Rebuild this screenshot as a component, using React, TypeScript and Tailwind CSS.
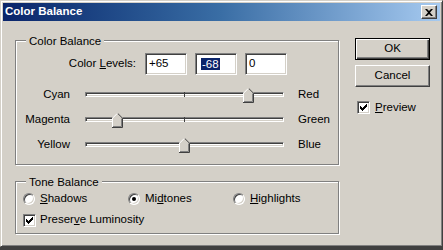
import React from "react"

// classic win2k bevels
const sunken =
  "border border-t-[#808080] border-l-[#808080] border-b-white border-r-white shadow-[inset_1px_1px_0_#404040,inset_-1px_-1px_0_#d4d0c8]"
const raised =
  "border border-t-white border-l-white border-b-[#404040] border-r-[#404040] shadow-[inset_-1px_-1px_0_#808080]"
const etched = "border border-[#808080] shadow-[inset_1px_1px_0_#fff,1px_1px_0_#fff]"

function TitleBar() {
  return (
    <div className="flex h-[18px] items-center justify-between bg-linear-to-r from-[#0a246a] via-[#3a6ea5] to-[#a6caf0] pl-[2px] pr-[3px]">
      <span className="text-[11.5px] font-bold text-white">Color Balance</span>
      <div className={`flex h-[14px] w-[16px] items-center justify-center bg-[#d4d0c8] ${raised}`}>
        <svg width="8" height="7" viewBox="0 0 8 7" className="-ml-[1px]">
          <path d="M0 0h2l2 2 2-2h2L5 3.5 8 7H6L4 5 2 7H0l3-3.5z" fill="#000" />
        </svg>
      </div>
    </div>
  )
}

function Group({ title, className, children }: { title: string; className: string; children: React.ReactNode }) {
  return (
    <div className={`relative w-[324px] ${etched} ${className}`}>
      <span className="absolute -top-[6px] left-[10px] bg-[#d4d0c8] px-[3px] leading-[13px]">{title}</span>
      {children}
    </div>
  )
}

function Field({ children, w }: { children: React.ReactNode; w: string }) {
  return (
    <div className={`flex h-[22px] items-center bg-white pl-[3px] ${w} ${sunken}`}>{children}</div>
  )
}

function Thumb({ value }: { value: number }) {
  // track is 199px wide, thumb is 11px, centre at 99
  const left = 99 + value * 0.99 - 5
  return (
    <svg
      width="11"
      height="15"
      viewBox="0 0 11 15"
      className="absolute -top-[4px]"
      style={{ left }}
    >
      <path d="M0 5L5 0h1l5 5v10H0z" fill="#d4d0c8" />
      <path d="M0.5 14V5.2L5.2 0.5" stroke="#fff" fill="none" />
      <path d="M5.8 0.5L10.5 5.2V14.5H0" stroke="#404040" fill="none" />
      <path d="M9.5 5.6V13.5H1" stroke="#808080" fill="none" />
    </svg>
  )
}

function Slider({ left, right, value }: { left: string; right: string; value: number }) {
  return (
    <div className="flex h-[25px] items-center">
      <span className="w-[54px] text-right">{left}</span>
      <div className="relative ml-[15px] h-[5px] w-[199px]">
        <div className={`h-full w-full bg-white ${sunken}`} />
        <div className="absolute left-[99px] top-0 h-[5px] w-[1px] bg-[#404040]" />
        <Thumb value={value} />
      </div>
      <span className="ml-[14px]">{right}</span>
    </div>
  )
}

function Check() {
  return (
    <div className={`flex h-[13px] w-[13px] shrink-0 items-center justify-center bg-white ${sunken}`}>
      <svg width="7" height="7" viewBox="0 0 7 7">
        <path d="M0 2h1v1h1v1h1V3h1V2h1V1h1V0h1v3H6v1H5v1H4v1H3v1H2V6H1V5H0z" fill="#000" />
      </svg>
    </div>
  )
}

function Radio({ on }: { on?: boolean }) {
  return (
    <div className="flex h-[12px] w-[12px] shrink-0 items-center justify-center rounded-full border border-t-[#808080] border-l-[#808080] border-b-white border-r-white bg-white shadow-[inset_1px_1px_0_#404040,inset_-1px_-1px_0_#d4d0c8]">
      {on && <div className="h-[4px] w-[4px] rounded-full bg-black" />}
    </div>
  )
}

export default function App() {
  return (
    <div className="h-[250px] w-[443px] overflow-hidden bg-[#404040] font-['Liberation_Sans',Arial,sans-serif] text-[11.5px] leading-none text-black">
      <div className="flex h-[247px] flex-col border border-t-[#d4d0c8] border-l-[#d4d0c8] border-b-[#404040] border-r-[#404040] bg-[#d4d0c8] p-[2px] shadow-[inset_1px_1px_0_#fff,inset_-1px_-1px_0_#808080]">
        <TitleBar />
        <div className="flex items-start pl-[12px]">
          <div className="flex flex-col pt-[19px]">
            <Group title="Color Balance" className="h-[125px] pt-[12px]">
              <div className="flex h-[22px] items-center">
                <span className="w-[120px] text-right">
                  Color <u>L</u>evels:
                </span>
                <div className="ml-[9px] flex gap-[8px]">
                  <Field w="w-[42px]">+65</Field>
                  <Field w="w-[42px]">
                    <span className="ml-[2px] bg-[#0a246a] px-[1px] leading-[12px] text-white">-68</span>
                  </Field>
                  <Field w="w-[42px]">0</Field>
                </div>
              </div>
              <div className="mt-[7px] flex flex-col">
                <Slider left="Cyan" right="Red" value={65} />
                <Slider left="Magenta" right="Green" value={-68} />
                <Slider left="Yellow" right="Blue" value={0} />
              </div>
            </Group>
            <Group title="Tone Balance" className="mt-[16px] h-[53px] pl-[7px] pt-[9px]">
              <div className="flex h-[16px] items-center">
                <label className="flex w-[105px] items-center gap-[5px]">
                  <Radio />
                  <span>
                    <u>S</u>hadows
                  </span>
                </label>
                <label className="flex w-[105px] items-center gap-[5px]">
                  <Radio on />
                  <span>
                    Mi<u>d</u>tones
                  </span>
                </label>
                <label className="flex w-[105px] items-center gap-[5px]">
                  <Radio />
                  <span>
                    <u>H</u>ighlights
                  </span>
                </label>
              </div>
              <label className="mt-[5px] flex h-[16px] items-center gap-[4px]">
                <Check />
                <span>
                  Preser<u>v</u>e Luminosity
                </span>
              </label>
            </Group>
          </div>
          <div className="ml-[16px] flex flex-col pt-[17px]">
            <button className="h-[22px] w-[75px] border border-black bg-[#d4d0c8] shadow-[inset_1px_1px_0_#fff,inset_-1px_-1px_0_#404040,inset_-2px_-2px_0_#808080]">
              OK
            </button>
            <button className={`mt-[5px] h-[22px] w-[75px] bg-[#d4d0c8] ${raised}`}>Cancel</button>
            <label className="mt-[14px] flex items-center gap-[5px] pl-[2px]">
              <Check />
              <span>
                <u>P</u>review
              </span>
            </label>
          </div>
        </div>
      </div>
    </div>
  )
}
